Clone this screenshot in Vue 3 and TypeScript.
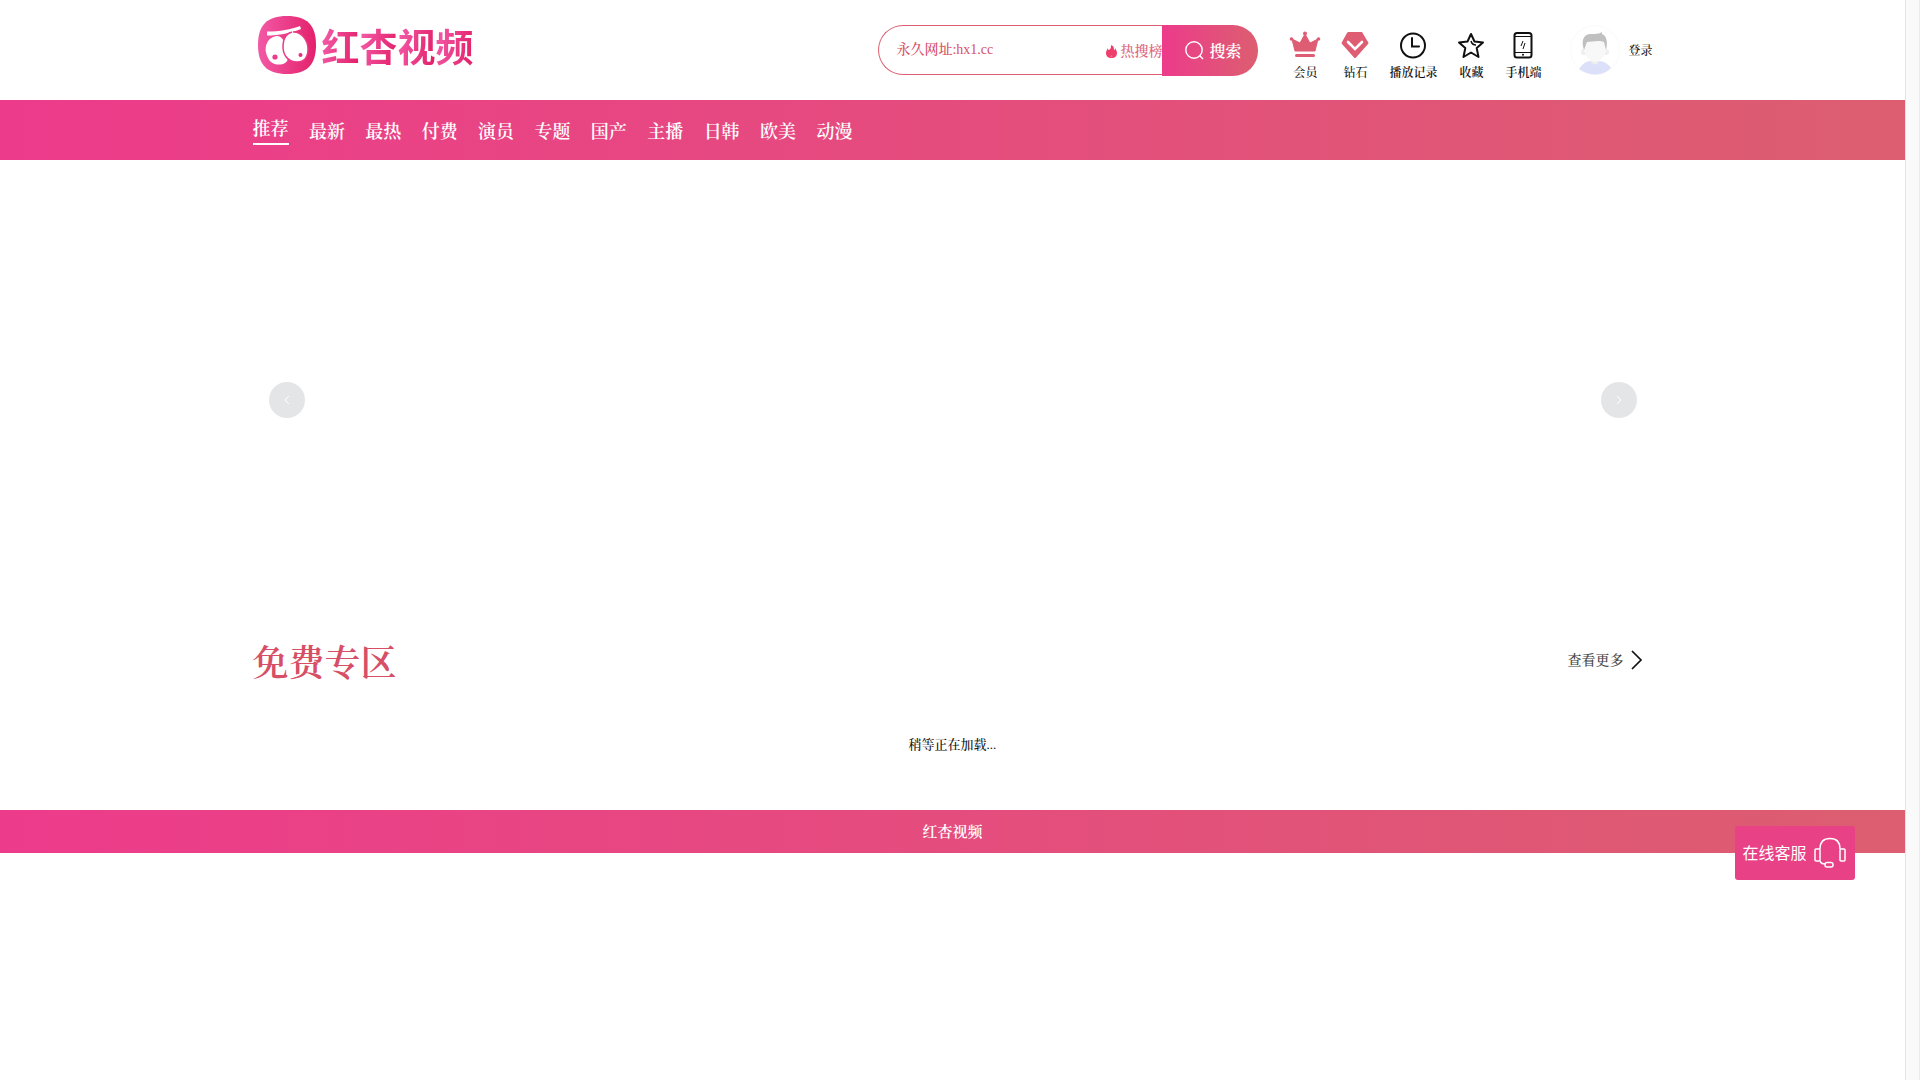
<script setup lang="ts">
import { ref } from 'vue'

const navItems: string[] = ['推荐', '最新', '最热', '付费', '演员', '专题', '国产', '主播', '日韩', '欧美', '动漫']
const active = ref(0)
const keyword = ref('')
</script>

<template>
  <div class="page">
    <div class="content">
      <header class="header wrap">
        <a class="logo" href="#">
          <svg class="logo-mark" viewBox="0 0 58 58" aria-hidden="true">
            <defs>
              <linearGradient id="markFill" x1="0" y1="0" x2="1" y2="0">
                <stop offset="0" stop-color="#f259a6" />
                <stop offset="1" stop-color="#e4216b" />
              </linearGradient>
            </defs>
            <path d="M29 0C49 0 58 9 58 29S49 58 29 58 0 49 0 29 9 0 29 0Z" fill="url(#markFill)" />
            <path d="M9 15.500C22 15.500 33 13.500 42 10L43 13C33 17 21 19.500 9 19.500Z" fill="#fff" />
            <path d="M18 20C24 19 28 27 29 33C30 40 31 45 27 47C22 50 13 49 10 42C5 33 8 22 18 20Z" fill="#fff" />
            <path d="M36 16C43 16 50 24 50 33C50 41 46 46 39 46C31 46 25 40 25 31C25 22 29 16 36 16Z" fill="#fff" stroke="#e93b89" stroke-width="1.500" />
            <path d="M34 14l1 4" stroke="#fff" stroke-width="1" />
            <circle cx="17" cy="41" r="2.600" fill="#ea3d8c" />
            <circle cx="42.500" cy="39" r="2" fill="#e62d7a" />
          </svg>
          <span class="logo-text"><span>红</span><span>杏</span><span>视</span><span>频</span></span>
        </a>

        <form class="search" role="search" @submit.prevent>
          <div class="field">
            <input v-model="keyword" type="text" aria-label="搜索" placeholder="永久网址:hx1.cc" />
            <a class="hot" href="#">
              <svg width="11" height="13" viewBox="0 0 11 13" aria-hidden="true">
                <path d="M5 0C8 1 8 3 8 5C9 5 9 4 9 3C10 5 11 6 11 8C11 11 9 13 5.500 13S0 11 0 8C0 6 1 5 2 3C2 4 2 5 3 5C5 4 5 2 5 0Z" fill="#ee3f6c" />
                <path d="M5.500 10C6.500 11 6.500 11 6.500 12H4.500C4.500 11 4.500 11 5.500 10Z" fill="#f4748f" />
              </svg>
              热搜榜
            </a>
          </div>
          <button class="search-btn" type="submit">
            <svg width="19" height="19" viewBox="0 0 19 19" fill="none" stroke="#fff" stroke-width="1.400" aria-hidden="true">
              <circle cx="9" cy="9" r="8.200" />
              <path d="M14.500 14.500L18 18" />
            </svg>
            搜索
          </button>
        </form>

        <div class="tools">
          <a class="tool wide" href="#">
            <svg width="32" height="28" viewBox="0 0 32 28" fill="#de5d72" aria-hidden="true">
              <path d="M6 20L3 8L11 12L16 3L21 12L29 8L26 20Z" stroke="#de5d72" stroke-linejoin="round" />
              <circle cx="2.500" cy="8" r="1.800" /><circle cx="16" cy="2.500" r="2" /><circle cx="29.500" cy="8" r="1.800" />
              <rect x="6" y="23" width="20" height="3" rx="1.500" />
            </svg>
            会员
          </a>
          <a class="tool" href="#">
            <svg width="28" height="28" viewBox="0 0 28 28" aria-hidden="true">
              <path d="M7 1H21L27 11Q28 12 27 13L15 26.500Q14 27.500 13 26.500L1 13Q0 12 1 11L6 2Z" fill="#de5d72" />
              <path d="M7 11L14 18L21 11" fill="none" stroke="#fff" stroke-width="2.600" stroke-linecap="round" />
            </svg>
            钻石
          </a>
          <a class="tool strong" href="#">
            <svg width="28" height="28" viewBox="0 0 28 28" fill="none" stroke="#111" stroke-width="2" stroke-linecap="round" aria-hidden="true">
              <circle cx="14" cy="14.500" r="12" /><path d="M13 7V15.500H20" />
            </svg>
            播放记录
          </a>
          <a class="tool strong" href="#">
            <svg width="28" height="28" viewBox="0 0 28 28" fill="none" stroke="#111" stroke-width="2" stroke-linejoin="round" aria-hidden="true">
              <path d="M14 3L17.500 10.500L26 11.500L19.700 17L21.500 26L14 21.500L6.500 26L8.300 17L2 11.500L10.500 10.500Z" />
              <path d="M14 10Q15 14 19 14" stroke-width="1.500" />
            </svg>
            收藏
          </a>
          <a class="tool strong" href="#">
            <svg width="28" height="28" viewBox="0 0 28 28" fill="none" stroke="#111" aria-hidden="true">
              <rect x="5.500" y="2" width="17" height="24.500" rx="2.500" stroke-width="2" />
              <path d="M6 5.500H22M6 21.500H22" stroke-width="1.200" />
              <path d="M14 10L12 15M16 12L14 18" stroke-width="1" />
              <circle cx="14" cy="23.800" r="1" fill="#111" stroke="none" />
            </svg>
            手机端
          </a>
        </div>

        <a class="login" href="#">
          <svg width="50" height="50" viewBox="0 0 50 50" aria-hidden="true">
            <circle cx="25" cy="25" r="24.500" fill="#fff" stroke="#fafafa" />
            <path d="M9 44C13 38 17 36 21 36H29C34 36 38 39 41 43C32 52 18 51 9 44Z" fill="#dce0f8" />
            <path d="M21 32H29V37Q25 42 21 37Z" fill="#eee" />
            <circle cx="14" cy="27" r="3" fill="#eee" /><circle cx="36" cy="27" r="3" fill="#efefef" />
            <path d="M14 20Q14 16 25 15Q36 16 36 20V26Q33 36 25 37Q17 36 14 26Z" fill="#f8f8f8" />
            <path d="M14 25C11 16 13 9 21 9C25 9 29 9 32 7V9C37 11 38 18 36 25L34 17C29 15 22 17 17 17Z" fill="#c0c0c0" />
          </svg>
          登录
        </a>
      </header>

      <nav class="nav">
        <div class="wrap">
          <ul>
            <li v-for="(item, i) in navItems" :key="item">
              <a href="#" :class="{ active: i === active }" @click.prevent="active = i">{{ item }}</a>
            </li>
          </ul>
        </div>
      </nav>

      <main class="wrap">
        <section class="carousel">
          <button type="button" aria-label="上一张">
            <svg width="12" height="12" viewBox="0 0 12 12" fill="none" stroke="#fff"><path d="M8 2L4 6L8 10" /></svg>
          </button>
          <button type="button" aria-label="下一张">
            <svg width="12" height="12" viewBox="0 0 12 12" fill="none" stroke="#fff"><path d="M4 2L8 6L4 10" /></svg>
          </button>
        </section>
        <section>
          <div class="section-head">
            <h2>免费专区</h2>
            <a href="#">
              <span>查看更多</span>
              <svg width="12" height="20" viewBox="0 0 12 20" fill="none" stroke="#111" stroke-width="1.700" aria-hidden="true"><path d="M1 1L10 10L1 19" /></svg>
            </a>
          </div>
          <p class="loading">稍等正在加载...</p>
        </section>
      </main>

      <footer class="footer">红杏视频</footer>
    </div>
    <div class="track"></div>

    <button class="service" type="button">
      在线客服
      <svg width="32" height="32" viewBox="0 0 32 32" fill="none" stroke="#fff" stroke-width="1.500" aria-hidden="true">
        <rect x="1" y="13" width="5" height="12" rx="1" />
        <rect x="26" y="13" width="5" height="12" rx="1" />
        <path d="M6 13C6 6 10 2.500 16 2.500S26 6 26 13M6 25Q7 28 11 28" />
        <rect x="11" y="26.500" width="8" height="4.500" rx="2" />
      </svg>
    </button>
  </div>
</template>

<style>
body {
  margin: 0;
  background: #fff;
}
</style>

<style scoped>
.page {
  --grad: linear-gradient(90deg, #ed3b8b, #dc5e70);
  --text: "Liberation Serif", "Noto Serif CJK SC", "Noto Sans CJK SC", serif;
  display: flex;
  min-height: 100vh;
  color: #111;
  font-family: var(--text);
  font-size: 12px;
  font-weight: 500;
}
a {
  color: inherit;
  text-decoration: none;
}
button {
  border: 0;
  padding: 0;
  color: #fff;
  font-family: inherit;
  cursor: pointer;
}
svg {
  display: block;
  flex: none;
}
.content {
  flex: 1;
  min-width: 0;
}
.track {
  box-sizing: border-box;
  width: 15px;
  background: #fafafa;
  border-left: 1px solid #e5e5e5;
  border-right: 1px solid #ececec;
}
.wrap {
  box-sizing: border-box;
  max-width: 1400px;
  margin: 0 auto;
}
.header {
  display: flex;
  align-items: center;
  height: 100px;
}
.logo {
  display: flex;
  align-items: center;
  gap: 6px;
  margin: 0 auto 10px 5px;
}
.logo-mark {
  width: 58px;
  height: 58px;
}
.logo-text {
  font: 700 38px/48px "Noto Sans CJK SC", sans-serif;
}
.logo-text span {
  background: linear-gradient(100deg, #f259a6 10%, #e4216b 90%);
  background-clip: text;
  color: transparent;
}
.search {
  display: flex;
  width: 380px;
  height: 51px;
  margin-right: 31px;
}
.field {
  box-sizing: border-box;
  display: flex;
  flex: 1;
  align-items: center;
  height: 50px;
  padding-left: 17px;
  border: 1px solid #dc5e70;
  border-right: 0;
  border-radius: 25px 0 0 25px;
}
.field input {
  flex: 1;
  min-width: 0;
  padding: 0;
  border: 0;
  outline: 0;
  background: none;
  color: #d64f66;
  font-family: var(--text);
  font-size: 14px;
  font-weight: 500;
}
.field input::placeholder {
  color: #d64f66;
  opacity: 1;
}
.hot {
  display: flex;
  align-items: center;
  gap: 3px;
  padding-top: 4px;
  color: #e0647a;
  font-size: 14px;
  line-height: 20px;
}
.search-btn {
  display: flex;
  align-items: center;
  justify-content: center;
  gap: 5px;
  width: 96px;
  padding: 1px 0 0 6px;
  border-radius: 0 25px 25px 0;
  background: var(--grad);
  font-size: 16px;
  font-weight: 600;
}
.tools {
  display: flex;
  gap: 20px;
  margin-right: 29px;
}
.tool {
  display: flex;
  flex-direction: column;
  align-items: center;
  gap: 6px;
  min-width: 28px;
  padding-top: 12px;
  line-height: 16px;
}
.wide {
  min-width: 32px;
}
.strong {
  font-weight: 600;
}
.login {
  display: flex;
  align-items: center;
  gap: 8px;
}
.nav {
  background: var(--grad);
}
.nav ul {
  display: flex;
  justify-content: space-between;
  max-width: 600px;
  height: 60px;
  margin: 0;
  padding: 0;
  list-style: none;
  color: #fff;
  font-size: 18px;
  font-weight: 600;
  line-height: 28px;
}
.nav a {
  display: block;
  margin-top: 18px;
}
.nav a.active {
  margin-top: 15px;
  border-bottom: 2px solid #fff;
}
.carousel {
  display: flex;
  align-items: center;
  justify-content: space-between;
  height: 480px;
  padding: 0 16px;
}
.carousel button {
  display: grid;
  place-items: center;
  width: 36px;
  height: 36px;
  border-radius: 50%;
  background: #e3e5e7;
}
.section-head {
  display: flex;
  align-items: center;
  justify-content: space-between;
  height: 44px;
  padding-right: 10px;
}
.section-head h2 {
  margin: 0;
  padding-top: 4px;
  color: #d64f66;
  font-size: 36px;
  font-weight: 600;
  line-height: 44px;
}
.section-head a {
  display: flex;
  align-items: center;
  gap: 7px;
  padding-bottom: 4px;
  color: #444;
  font-size: 14px;
}
.section-head span {
  padding-top: 2px;
  line-height: 20px;
}
.loading {
  margin: 51px 0 0;
  text-align: center;
  font-size: 13px;
  line-height: 20px;
}
.footer {
  margin-top: 55px;
  padding-top: 1px;
  background: var(--grad);
  color: #fff;
  font-size: 15px;
  font-weight: 600;
  line-height: 42px;
  text-align: center;
}
.service {
  position: fixed;
  right: 65px;
  bottom: 200px;
  display: flex;
  align-items: center;
  justify-content: center;
  gap: 7px;
  width: 120px;
  height: 54px;
  padding: 0 2px 2px 0;
  border-radius: 3px;
  background: #e94186;
  font: 16px "Noto Sans CJK SC", sans-serif;
}
</style>
